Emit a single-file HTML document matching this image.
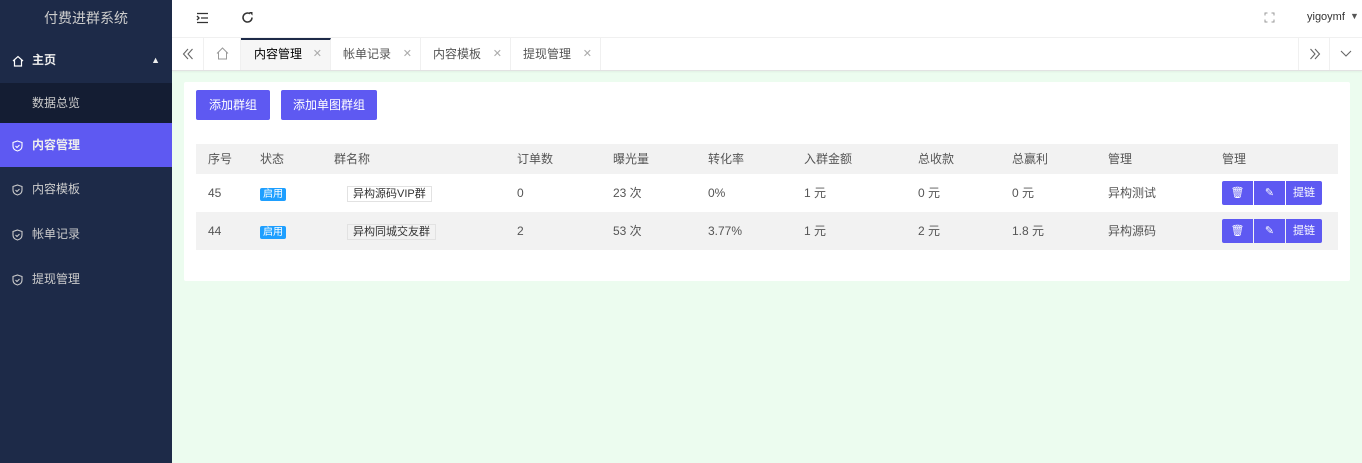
<!DOCTYPE html>
<html><head><meta charset="utf-8"><style>
*{margin:0;padding:0;box-sizing:border-box}
body{width:1362px;height:463px;overflow:hidden;font-family:"Liberation Sans","Noto Sans CJK SC",sans-serif;font-size:12px;color:#555;background:#ecfcef;position:relative}
.side{position:absolute;left:0;top:0;width:172px;height:463px;background:#1d2a48;color:#fff}
.logo{height:37px;line-height:37px;text-align:center;font-size:14px;color:#ccc}
.mi{position:absolute;left:0;width:172px;height:45px;line-height:45px;padding-left:32px;color:#eee;font-size:12px}
.mi svg{position:absolute;left:12px;top:17px}
.top{position:absolute;left:172px;top:0;right:0;height:38px;background:#fff;border-bottom:1px solid #f0f0f0}
.tabs{position:absolute;left:172px;top:38px;right:0;height:33px;background:#fff;border-bottom:1px solid #e2e2e2;box-shadow:0 1px 2px rgba(0,0,0,.05)}
.tab{position:absolute;top:0;height:32px;line-height:32px;border-right:1px solid #f0f0f0;font-size:12px;color:#555}
.tab .x{position:absolute;right:8px;color:#aaa;font-size:11px}
.card{position:absolute;left:184px;top:82px;width:1166px;height:199px;background:#fff;border-radius:2px}
.btn{position:absolute;top:8px;height:30px;line-height:30px;background:#5e59f2;color:#fff;text-align:center;border-radius:2px;font-size:12px}
.row{position:absolute;left:12px;width:1142px;height:38px}
.c{position:absolute;top:0;line-height:38px}
.badge{background:#1e9fff;color:#fff;font-size:10px;padding:1px 3px;border-radius:2px}
.nm{border:1px solid #e2e2e2;padding:1px 5px;font-size:11px;color:#333}
.ab{position:absolute;top:7px;height:24px;background:#5e59f2;color:#fff;text-align:center;line-height:24px;font-size:11px}
</style></head><body>
<div class="side">
<div class="logo">付费进群系统</div>
<div class="mi" style="top:38px;background:#1d2a48;font-weight:bold"><svg width="12" height="12" viewBox="0 0 12 12"><path d="M1 6L6 1.5 11 6M2.5 5v6h7V5" fill="none" stroke="#fff" stroke-width="1.2"/></svg>主页<span style="position:absolute;right:12px;top:0;font-size:9px">▲</span></div>
<div class="mi" style="top:83px;height:40px;line-height:40px;background:#141d33;color:#ccc">数据总览</div>
<div class="mi" style="top:123px;height:44px;line-height:44px;background:#5e59f2;font-weight:bold"><svg width="11" height="12" viewBox="0 0 11 12"><path d="M5.5 1L10 2.5V6c0 3-2.5 4.5-4.5 5C3.5 10.5 1 9 1 6V2.5z M3.5 6l1.5 1.5 2.5-2.5" fill="none" stroke="#fff" stroke-width="1.1"/></svg>内容管理</div>
<div class="mi" style="top:167px;color:#ccc"><svg width="11" height="12" viewBox="0 0 11 12"><path d="M5.5 1L10 2.5V6c0 3-2.5 4.5-4.5 5C3.5 10.5 1 9 1 6V2.5z M3.5 6l1.5 1.5 2.5-2.5" fill="none" stroke="#ccc" stroke-width="1.1"/></svg>内容模板</div>
<div class="mi" style="top:212px;color:#ccc"><svg width="11" height="12" viewBox="0 0 11 12"><path d="M5.5 1L10 2.5V6c0 3-2.5 4.5-4.5 5C3.5 10.5 1 9 1 6V2.5z M3.5 6l1.5 1.5 2.5-2.5" fill="none" stroke="#ccc" stroke-width="1.1"/></svg>帐单记录</div>
<div class="mi" style="top:257px;color:#ccc"><svg width="11" height="12" viewBox="0 0 11 12"><path d="M5.5 1L10 2.5V6c0 3-2.5 4.5-4.5 5C3.5 10.5 1 9 1 6V2.5z M3.5 6l1.5 1.5 2.5-2.5" fill="none" stroke="#ccc" stroke-width="1.1"/></svg>提现管理</div>
</div>
<div class="top">
<svg style="position:absolute;left:24px;top:12px" width="13" height="12" viewBox="0 0 13 12"><path d="M1 1.5h11M5 6h7M1 10.5h11M1 4l2 2-2 2" fill="none" stroke="#333" stroke-width="1.3"/></svg>
<svg style="position:absolute;left:69px;top:11px" width="13" height="13" viewBox="0 0 13 13"><path d="M11 6.5A4.5 4.5 0 1 1 9 2.8" fill="none" stroke="#333" stroke-width="1.5"/><path d="M8 1h3.5v3.5z" fill="#333"/></svg>
<svg style="position:absolute;left:1092px;top:12px" width="11" height="11" viewBox="0 0 11 11"><path d="M1 3.5V1h2.5M7.5 1H10v2.5M10 7.5V10H7.5M3.5 10H1V7.5" fill="none" stroke="#999" stroke-width="1"/></svg>
<span style="position:absolute;left:1135px;top:11px;font-size:11px;color:#333">yigoymf</span>
<span style="position:absolute;left:1178px;top:11px;font-size:9px;color:#555">▼</span>
</div>
<div class="tabs">
<div class="tab" style="left:0;width:32px"><svg style="position:absolute;left:10px;top:10px" width="12" height="12" viewBox="0 0 12 12"><path d="M6 1L1.5 6 6 11M10.5 1L6 6l4.5 5" fill="none" stroke="#666" stroke-width="1.1"/></svg></div>
<div class="tab" style="left:32px;width:37px"><svg style="position:absolute;left:12px;top:9px" width="13" height="13" viewBox="0 0 13 13"><path d="M1 6.5L6.5 1 12 6.5M2.5 5v7h8V5" fill="none" stroke="#999" stroke-width="1"/></svg></div>
<div class="tab" style="left:69px;width:90px;background:#f6f6f6;border-top:2px solid #1d2a48;line-height:28px;padding-left:13px;color:#000">内容管理<span class="x">✕</span></div>
<div class="tab" style="left:159px;width:90px;padding-left:12px">帐单记录<span class="x">✕</span></div>
<div class="tab" style="left:249px;width:90px;padding-left:12px">内容模板<span class="x">✕</span></div>
<div class="tab" style="left:339px;width:90px;padding-left:12px">提现管理<span class="x">✕</span></div>
<div class="tab" style="left:1126px;width:32px;border-left:1px solid #f0f0f0"><svg style="position:absolute;left:10px;top:10px" width="12" height="12" viewBox="0 0 12 12"><path d="M1.5 1L6 6l-4.5 5M6 1l4.5 5L6 11" fill="none" stroke="#666" stroke-width="1.1"/></svg></div>
<div class="tab" style="left:1158px;width:32px;border-right:0"><svg style="position:absolute;left:10px;top:12px" width="12" height="8" viewBox="0 0 12 8"><path d="M1 1l5 5 5-5" fill="none" stroke="#666" stroke-width="1.1"/></svg></div>
</div>
<div class="card">
<div class="btn" style="left:12px;width:74px">添加群组</div>
<div class="btn" style="left:97px;width:96px">添加单图群组</div>
<div class="row" style="top:62px;height:30px;background:#f2f2f2">
<span class="c" style="left:12px;line-height:30px">序号</span><span class="c" style="left:64px;line-height:30px">状态</span><span class="c" style="left:138px;line-height:30px">群名称</span><span class="c" style="left:321px;line-height:30px">订单数</span><span class="c" style="left:417px;line-height:30px">曝光量</span><span class="c" style="left:512px;line-height:30px">转化率</span><span class="c" style="left:608px;line-height:30px">入群金额</span><span class="c" style="left:722px;line-height:30px">总收款</span><span class="c" style="left:816px;line-height:30px">总赢利</span><span class="c" style="left:912px;line-height:30px">管理</span><span class="c" style="left:1026px;line-height:30px">管理</span>
</div>
<div class="row" style="top:92px">
<span class="c" style="left:12px">45</span><span class="c" style="left:64px"><span class="badge">启用</span></span><span class="c" style="left:151px"><span class="nm">异构源码VIP群</span></span><span class="c" style="left:321px">0</span><span class="c" style="left:417px">23 次</span><span class="c" style="left:512px">0%</span><span class="c" style="left:608px">1 元</span><span class="c" style="left:722px">0 元</span><span class="c" style="left:816px">0 元</span><span class="c" style="left:912px">异构测试</span>
<div class="ab" style="left:1026px;width:31px;border-radius:2px 0 0 2px">🗑</div><div class="ab" style="left:1058px;width:31px">✎</div><div class="ab" style="left:1090px;width:36px;border-radius:0 2px 2px 0">提链</div>
</div>
<div class="row" style="top:130px;background:#f2f2f2">
<span class="c" style="left:12px">44</span><span class="c" style="left:64px"><span class="badge">启用</span></span><span class="c" style="left:151px"><span class="nm">异构同城交友群</span></span><span class="c" style="left:321px">2</span><span class="c" style="left:417px">53 次</span><span class="c" style="left:512px">3.77%</span><span class="c" style="left:608px">1 元</span><span class="c" style="left:722px">2 元</span><span class="c" style="left:816px">1.8 元</span><span class="c" style="left:912px">异构源码</span>
<div class="ab" style="left:1026px;width:31px;border-radius:2px 0 0 2px">🗑</div><div class="ab" style="left:1058px;width:31px">✎</div><div class="ab" style="left:1090px;width:36px;border-radius:0 2px 2px 0">提链</div>
</div>
</div>
</body></html>
